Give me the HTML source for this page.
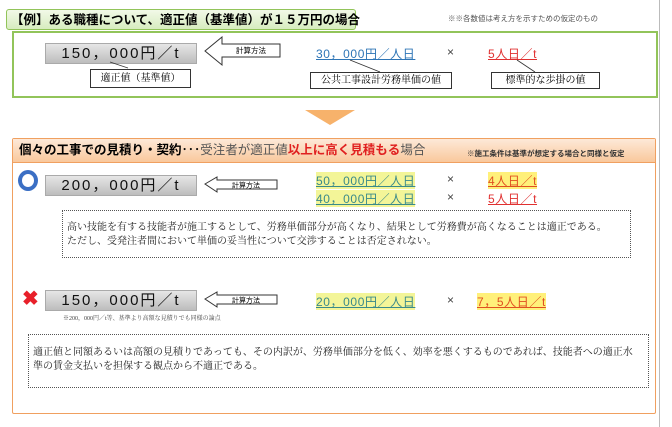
<!DOCTYPE html>
<html><head><meta charset="utf-8"><style>
body{margin:0;width:672px;height:427px;background:#fff;position:relative;overflow:hidden;font-family:"Liberation Sans","Noto Sans CJK JP",sans-serif}
.a{position:absolute;white-space:nowrap}
.ser{font-family:"Liberation Serif","Noto Serif CJK SC",serif}
.gbox{position:absolute;background:linear-gradient(#e6e6e6,#bdbdbd);border:1px solid #aaa;font-size:15px;color:#111;text-align:center;letter-spacing:2px}
.lbl{position:absolute;border:1px solid #333;background:#fff;font-size:10px;text-align:center;font-family:"Liberation Serif","Noto Serif CJK SC",serif}
.blue{color:#2e75b6;text-decoration:underline;font-size:12px;letter-spacing:.6px}
.red{color:#e03030;text-decoration:underline;font-size:12px;letter-spacing:.6px}
.x{font-size:12px;color:#444}
.dot{position:absolute;border:1px dotted #555;background:#fff}
</style></head><body>
<div class="a" style="left:659px;top:0;width:1px;height:427px;background:#bbb"></div>
<!-- top -->
<div class="a" style="left:12px;top:31px;width:642px;height:63px;border:2px solid #92c45a;background:#fff"></div>
<div class="a" style="left:6px;top:9px;width:350px;height:21px;background:linear-gradient(#f2f9e8,#d7ecbf);border:1px solid #92c45a;border-radius:3px;font-size:12.5px;font-weight:bold;line-height:21px;padding-left:4px;box-sizing:border-box">【例】ある職種について、適正値（基準値）が１５万円の場合</div>
<div class="a" style="left:448px;top:13px;font-size:7.5px;color:#555">※※各数値は考え方を示すための仮定のもの</div>
<div class="gbox" style="left:45px;top:43px;width:150px;height:19px;line-height:19px">150，000円／t</div>
<svg class="a" style="left:204px;top:36px" width="78" height="32"><path d="M1 15 L18 1 L18 8 L76 8 L76 21 L18 21 L18 29 Z" fill="#fff" stroke="#333"/><text x="32" y="17" font-size="7.5" font-family="Noto Sans CJK JP">計算方法</text></svg>
<div class="a blue" style="left:316px;top:45px">30，000円／人日</div>
<div class="a x" style="left:447px;top:45px">×</div>
<div class="a red" style="left:488px;top:45px">5人日／t</div>
<svg class="a" style="left:0;top:0" width="672" height="427"><g stroke="#333" stroke-width=".8"><line x1="110" y1="62" x2="128" y2="68"/><line x1="350" y1="60" x2="380" y2="72"/><line x1="517" y1="60" x2="535" y2="72"/></g>
<path d="M305 110 L355 110 L330 125 Z" fill="#f7b26b"/>
<line x1="390" y1="206" x2="396" y2="210" stroke="#555" stroke-dasharray="2,1"/>
<g stroke="#555" stroke-width=".8" stroke-dasharray="2,1"><line x1="366" y1="310" x2="391" y2="334"/><line x1="489" y1="313" x2="461" y2="334"/></g></svg>
<div class="lbl" style="left:90px;top:69px;width:99px;height:17px;line-height:17px">適正値（基準値）</div>
<div class="lbl" style="left:310px;top:72px;width:140px;height:15px;line-height:15px">公共工事設計労務単価の値</div>
<div class="lbl" style="left:491px;top:72px;width:107px;height:15px;line-height:15px">標準的な歩掛の値</div>
<!-- bottom -->
<div class="a" style="left:12px;top:138px;width:642px;height:274px;border:1.5px solid #f0a060;background:#fff;border-radius:2px"></div>
<div class="a" style="left:13px;top:139px;width:642px;height:23px;background:linear-gradient(#fde9d8,#f9c89c);border-bottom:1px solid #f0a060"></div>
<div class="a" style="left:19px;top:141px;font-size:12.5px;line-height:18px"><b>個々の工事での見積り・契約</b>･･･<span style="color:#555">受注者が適正値</span><b style="color:#e02020">以上に高く見積もる</b><span style="color:#555">場合</span></div>
<div class="a" style="left:467px;top:148px;font-size:7.5px;font-weight:bold;color:#333">※施工条件は基準が想定する場合と同様と仮定</div>
<div class="a" style="left:18px;top:170px;width:12px;height:13px;border:4px solid #3b6fc4;border-radius:50%"></div>
<div class="gbox" style="left:45px;top:175px;width:150px;height:19px;line-height:19px">200，000円／t</div>
<svg class="a" style="left:204px;top:176px" width="78" height="18"><path d="M1 8 L13 1 L13 4 L73 4 L73 13 L13 13 L13 16 Z" fill="#fff" stroke="#333"/><text x="28" y="11.5" font-size="7" font-family="Noto Sans CJK JP">計算方法</text></svg>
<div class="a blue" style="left:316px;top:172px;background:#f3f598;color:#3a8a8a">50，000円／人日</div>
<div class="a x" style="left:447px;top:172px">×</div>
<div class="a red" style="left:488px;top:172px;background:#fff07a;color:#e05020">4人日／t</div>
<div class="a blue" style="left:316px;top:190px;background:#f3f598;color:#3a8a8a">40，000円／人日</div>
<div class="a x" style="left:447px;top:190px">×</div>
<div class="a red" style="left:488px;top:190px">5人日／t</div>
<div class="dot" style="left:62px;top:210px;width:567px;height:46px"></div>
<div class="a ser" style="left:67px;top:221px;font-size:10px;line-height:14px;color:#222">高い技能を有する技能者が施工するとして、労務単価部分が高くなり、結果として労務費が高くなることは適正である。<br>ただし、受発注者間において単価の妥当性について交渉することは否定されない。</div>
<div class="a" style="left:22px;top:289px;font-size:20px;font-weight:bold;color:#e8202a;line-height:20px">✖</div>
<div class="gbox" style="left:45px;top:290px;width:150px;height:19px;line-height:19px">150，000円／t</div>
<svg class="a" style="left:204px;top:291px" width="78" height="18"><path d="M1 8 L13 1 L13 4 L73 4 L73 13 L13 13 L13 16 Z" fill="#fff" stroke="#333"/><text x="28" y="11.5" font-size="7" font-family="Noto Sans CJK JP">計算方法</text></svg>
<div class="a ser" style="left:63px;top:313px;font-size:6px;color:#444">※200，000円／t等、基準より高額な見積りでも同様の論点</div>
<div class="a blue" style="left:316px;top:293px;background:#f3f598;color:#3a8a8a">20，000円／人日</div>
<div class="a x" style="left:447px;top:293px">×</div>
<div class="a red" style="left:477px;top:293px;background:#fff07a;color:#e05020">7，5人日／t</div>
<div class="dot" style="left:28px;top:334px;width:619px;height:52px"></div>
<div class="a ser" style="left:33px;top:346px;font-size:10px;line-height:14px;color:#222">適正値と同額あるいは高額の見積りであっても、その内訳が、労務単価部分を低く、効率を悪くするものであれば、技能者への適正水<br>準の賃金支払いを担保する観点から不適正である。</div>
</body></html>
